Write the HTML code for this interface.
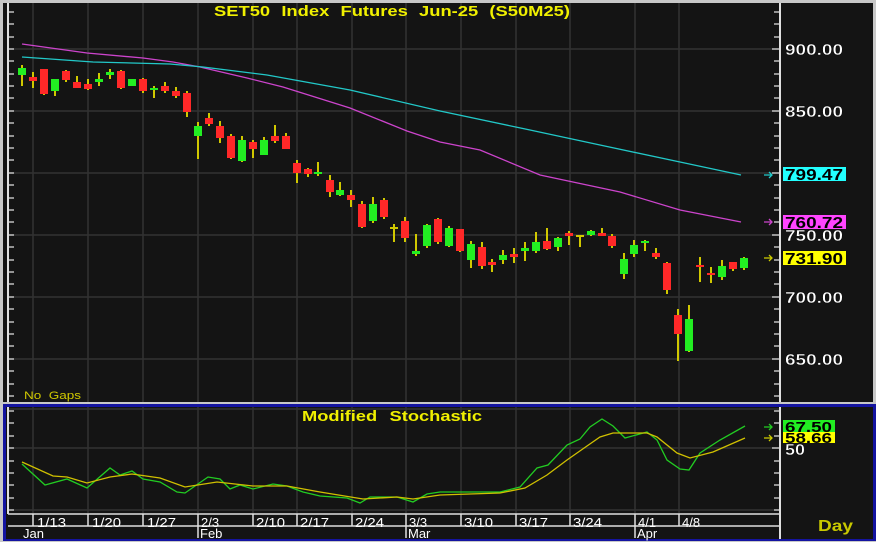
<!DOCTYPE html>
<html><head><meta charset="utf-8"><style>
html,body{margin:0;padding:0;background:#c8c8c8;}
svg{display:block;font-family:"Liberation Sans",Arial,sans-serif;}
.t{font-weight:bold;fill:#f0f000;font-size:14px;}
.p{font-weight:bold;fill:#fff;font-size:16px;stroke:#000;stroke-width:0.4;}
.d{fill:#fff;font-size:13px;}
</style></head><body>
<svg width="876" height="542" viewBox="0 0 876 542" xmlns="http://www.w3.org/2000/svg">
<rect x="0" y="0" width="876" height="542" fill="#c8c8c8"/>
<rect x="3" y="3" width="870" height="399" fill="#141414"/>
<rect x="3" y="404" width="873" height="137" fill="#1414a0"/>
<rect x="6" y="407" width="867" height="132" fill="#141414"/>
<g stroke="#333" stroke-width="1.5">
<line x1="9" y1="49" x2="779" y2="49"/><line x1="9" y1="111" x2="779" y2="111"/><line x1="9" y1="173" x2="779" y2="173"/><line x1="9" y1="235" x2="779" y2="235"/><line x1="9" y1="297" x2="779" y2="297"/><line x1="9" y1="359" x2="779" y2="359"/>
<line x1="33" y1="3" x2="33" y2="402"/><line x1="88" y1="3" x2="88" y2="402"/><line x1="143" y1="3" x2="143" y2="402"/><line x1="198" y1="3" x2="198" y2="402"/><line x1="253" y1="3" x2="253" y2="402"/><line x1="297" y1="3" x2="297" y2="402"/><line x1="352" y1="3" x2="352" y2="402"/><line x1="406" y1="3" x2="406" y2="402"/><line x1="461" y1="3" x2="461" y2="402"/><line x1="516" y1="3" x2="516" y2="402"/><line x1="570" y1="3" x2="570" y2="402"/><line x1="635" y1="3" x2="635" y2="402"/><line x1="679" y1="3" x2="679" y2="402"/>
<line x1="9" y1="409" x2="779" y2="409"/><line x1="9" y1="448" x2="779" y2="448"/><line x1="9" y1="510" x2="779" y2="510"/>
<line x1="33" y1="407" x2="33" y2="514"/><line x1="88" y1="407" x2="88" y2="514"/><line x1="143" y1="407" x2="143" y2="514"/><line x1="198" y1="407" x2="198" y2="514"/><line x1="253" y1="407" x2="253" y2="514"/><line x1="297" y1="407" x2="297" y2="514"/><line x1="352" y1="407" x2="352" y2="514"/><line x1="406" y1="407" x2="406" y2="514"/><line x1="461" y1="407" x2="461" y2="514"/><line x1="516" y1="407" x2="516" y2="514"/><line x1="570" y1="407" x2="570" y2="514"/><line x1="635" y1="407" x2="635" y2="514"/><line x1="679" y1="407" x2="679" y2="514"/>
</g>
<g stroke="#e0e0e0" stroke-width="2">
<line x1="8" y1="3" x2="8" y2="402"/><line x1="780" y1="3" x2="780" y2="402"/>
<line x1="8" y1="407" x2="8" y2="514"/><line x1="780" y1="407" x2="780" y2="539"/>
</g>
<g stroke="#e0e0e0" stroke-width="1.2">
<path d="M8 12h6M8 24h6M8 37h6M8 49h6M8 61h6M8 74h6M8 86h6M8 98h6M8 111h6M8 123h6M8 136h6M8 148h6M8 160h6M8 173h6M8 185h6M8 198h6M8 210h6M8 222h6M8 235h6M8 247h6M8 260h6M8 272h6M8 284h6M8 297h6M8 309h6M8 322h6M8 334h6M8 346h6M8 359h6M8 371h6M8 384h6M8 396h6"/>
<path d="M780 12h-6M780 24h-6M780 37h-6M780 49h-8M780 61h-6M780 74h-6M780 86h-6M780 98h-6M780 111h-8M780 123h-6M780 136h-6M780 148h-6M780 160h-6M780 173h-8M780 185h-6M780 198h-6M780 210h-6M780 222h-6M780 235h-8M780 247h-6M780 260h-6M780 272h-6M780 284h-6M780 297h-8M780 309h-6M780 322h-6M780 334h-6M780 346h-6M780 359h-8M780 371h-6M780 384h-6M780 396h-6"/>
<path d="M8 411h6M8 423h6M8 436h6M8 448h6M8 461h6M8 473h6M8 485h6M8 498h6M8 510h6"/>
<path d="M780 411h-6M780 423h-6M780 436h-6M780 448h-8M780 461h-6M780 473h-6M780 485h-6M780 498h-6M780 510h-6"/>
</g>
<polyline fill="none" stroke="#cc44cc" stroke-width="1.3" points="22,44 87,53 143,58 173,62 200,67 247,78 283,87 350,108 407,131 440,142 480,150 540,175 620,192 680,210 741,222"/>
<polyline fill="none" stroke="#22c8c8" stroke-width="1.3" points="22,57 93,62 170,64 203,67 267,75 350,90 440,111 530,130 600,145 680,162 741,175"/>
<g stroke="#d0c800" stroke-width="2">
<line x1="22" y1="65" x2="22" y2="86"/><line x1="33" y1="72" x2="33" y2="88"/><line x1="44" y1="69" x2="44" y2="95"/><line x1="55" y1="79" x2="55" y2="96"/><line x1="66" y1="70" x2="66" y2="82"/><line x1="77" y1="76" x2="77" y2="88"/><line x1="88" y1="79" x2="88" y2="90"/><line x1="99" y1="73" x2="99" y2="86"/><line x1="110" y1="69" x2="110" y2="79"/><line x1="121" y1="70" x2="121" y2="89"/><line x1="132" y1="79" x2="132" y2="86"/><line x1="143" y1="78" x2="143" y2="93"/><line x1="154" y1="86" x2="154" y2="98"/><line x1="165" y1="82" x2="165" y2="93"/><line x1="176" y1="87" x2="176" y2="98"/><line x1="187" y1="91" x2="187" y2="117"/><line x1="198" y1="122" x2="198" y2="159"/><line x1="209" y1="113" x2="209" y2="126"/><line x1="220" y1="121" x2="220" y2="143"/><line x1="231" y1="134" x2="231" y2="159"/><line x1="242" y1="136" x2="242" y2="162"/><line x1="253" y1="140" x2="253" y2="158"/><line x1="264" y1="137" x2="264" y2="155"/><line x1="275" y1="125" x2="275" y2="143"/><line x1="286" y1="133" x2="286" y2="149"/>
<line x1="297" y1="160" x2="297" y2="183"/><line x1="308" y1="168" x2="308" y2="177"/><line x1="318" y1="162" x2="318" y2="176"/><line x1="330" y1="175" x2="330" y2="197"/><line x1="340" y1="182" x2="340" y2="196"/><line x1="351" y1="190" x2="351" y2="207"/><line x1="362" y1="201" x2="362" y2="228"/><line x1="373" y1="197" x2="373" y2="223"/><line x1="384" y1="198" x2="384" y2="219"/><line x1="394" y1="224" x2="394" y2="242"/><line x1="405" y1="217" x2="405" y2="242"/><line x1="416" y1="234" x2="416" y2="256"/><line x1="427" y1="224" x2="427" y2="248"/><line x1="438" y1="218" x2="438" y2="244"/><line x1="449" y1="226" x2="449" y2="247"/><line x1="460" y1="229" x2="460" y2="252"/><line x1="471" y1="241" x2="471" y2="268"/><line x1="482" y1="242" x2="482" y2="269"/><line x1="492" y1="259" x2="492" y2="272"/><line x1="503" y1="250" x2="503" y2="264"/><line x1="514" y1="248" x2="514" y2="263"/><line x1="525" y1="242" x2="525" y2="261"/><line x1="536" y1="232" x2="536" y2="253"/><line x1="547" y1="228" x2="547" y2="250"/><line x1="558" y1="237" x2="558" y2="251"/><line x1="569" y1="231" x2="569" y2="245"/><line x1="580" y1="235" x2="580" y2="247"/><line x1="591" y1="230" x2="591" y2="236"/><line x1="602" y1="228" x2="602" y2="236"/><line x1="612" y1="234" x2="612" y2="248"/>
<line x1="624" y1="253" x2="624" y2="279"/><line x1="634" y1="240" x2="634" y2="257"/><line x1="645" y1="240" x2="645" y2="251"/><line x1="656" y1="248" x2="656" y2="259"/><line x1="667" y1="262" x2="667" y2="294"/><line x1="678" y1="309" x2="678" y2="361"/><line x1="689" y1="305" x2="689" y2="352"/><line x1="700" y1="257" x2="700" y2="282"/><line x1="711" y1="267" x2="711" y2="283"/><line x1="722" y1="260" x2="722" y2="280"/><line x1="733" y1="262" x2="733" y2="271"/><line x1="744" y1="257" x2="744" y2="270"/>
<line x1="390" y1="228" x2="398" y2="228"/><line x1="576" y1="236" x2="584" y2="236"/>
</g>
<g fill="#ff2828">
<rect x="29" y="77" width="8" height="4"/><rect x="40" y="69" width="8" height="25"/><rect x="62" y="71" width="8" height="9"/><rect x="73" y="82" width="8" height="6"/><rect x="84" y="84" width="8" height="5"/><rect x="117" y="71" width="8" height="17"/><rect x="139" y="79" width="8" height="12"/><rect x="161" y="86" width="8" height="5"/><rect x="172" y="91" width="8" height="5"/><rect x="183" y="93" width="8" height="19"/><rect x="205" y="118" width="8" height="6"/><rect x="216" y="126" width="8" height="12"/><rect x="227" y="136" width="8" height="22"/><rect x="249" y="142" width="8" height="7"/><rect x="271" y="136" width="8" height="5"/><rect x="282" y="136" width="8" height="13"/>
<rect x="293" y="163" width="8" height="10"/><rect x="304" y="169" width="8" height="5"/><rect x="326" y="180" width="8" height="12"/><rect x="347" y="195" width="8" height="5"/><rect x="358" y="204" width="8" height="23"/><rect x="380" y="200" width="8" height="17"/><rect x="401" y="221" width="8" height="17"/><rect x="434" y="219" width="8" height="23"/><rect x="456" y="229" width="8" height="22"/><rect x="478" y="247" width="8" height="19"/><rect x="488" y="262" width="8" height="3"/><rect x="510" y="254" width="8" height="3"/><rect x="543" y="241" width="8" height="8"/><rect x="565" y="233" width="8" height="3"/><rect x="598" y="233" width="8" height="3"/><rect x="608" y="236" width="8" height="10"/>
<rect x="652" y="253" width="8" height="4"/><rect x="663" y="263" width="8" height="27"/><rect x="674" y="315" width="8" height="19"/><rect x="696" y="265" width="8" height="2"/><rect x="707" y="273" width="8" height="2"/><rect x="729" y="262" width="8" height="7"/>
</g>
<g fill="#22ee22">
<rect x="18" y="68" width="8" height="7"/><rect x="51" y="79" width="8" height="12"/><rect x="95" y="79" width="8" height="3"/><rect x="106" y="72" width="8" height="3"/><rect x="128" y="79" width="8" height="7"/><rect x="150" y="88" width="8" height="2"/><rect x="194" y="126" width="8" height="10"/><rect x="238" y="140" width="8" height="21"/><rect x="260" y="140" width="8" height="15"/>
<rect x="314" y="172" width="8" height="2"/><rect x="336" y="190" width="8" height="5"/><rect x="369" y="204" width="8" height="17"/><rect x="412" y="251" width="8" height="3"/><rect x="423" y="225" width="8" height="21"/><rect x="445" y="228" width="8" height="18"/><rect x="467" y="244" width="8" height="16"/><rect x="499" y="255" width="8" height="5"/><rect x="521" y="248" width="8" height="3"/><rect x="532" y="242" width="8" height="9"/><rect x="554" y="238" width="8" height="9"/><rect x="587" y="231" width="8" height="4"/>
<rect x="620" y="259" width="8" height="15"/><rect x="630" y="245" width="8" height="9"/><rect x="641" y="241" width="8" height="2"/><rect x="685" y="319" width="8" height="32"/><rect x="718" y="266" width="8" height="11"/><rect x="740" y="258" width="8" height="10"/>
</g>
<polyline fill="none" stroke="#22cc22" stroke-width="1.3" points="22,464 45,485 67,479 87,488 110,468 120,475 132,471 143,479 160,482 177,492 185,493 208,477 220,479 230,489 240,485 253,489 273,484 287,486 303,492 320,496 347,498 360,503 370,497 397,497 413,502 427,494 440,492 500,492 520,487 537,468 548,465 567,445 580,439 590,427 602,419 613,426 625,438 647,432 657,440 667,460 680,469 689,470 700,453 720,440 745,426"/>
<polyline fill="none" stroke="#d0c000" stroke-width="1.3" points="22,462 53,476 67,477 87,483 110,477 132,474 160,478 185,487 217,482 253,486 287,486 320,492 363,499 397,497 413,499 440,495 500,493 525,488 547,475 567,460 587,446 600,437 613,433 647,433 657,437 677,453 690,458 713,452 745,438"/>
<g stroke="#e0e0e0" stroke-width="1.5">
<line x1="8" y1="514" x2="780" y2="514"/><line x1="8" y1="526" x2="780" y2="526"/>
<path d="M33 514v12M88 514v12M143 514v12M198 514v12M253 514v12M297 514v12M352 514v12M406 514v12M461 514v12M516 514v12M570 514v12M635 514v12M679 514v12M198 526v12M406 526v12M635 526v12"/>
</g>
<g class="d">
<text x="37" y="527" textLength="29" lengthAdjust="spacingAndGlyphs">1/13</text><text x="92" y="527" textLength="29" lengthAdjust="spacingAndGlyphs">1/20</text><text x="147" y="527" textLength="29" lengthAdjust="spacingAndGlyphs">1/27</text><text x="201" y="527">2/3</text><text x="256" y="527" textLength="29" lengthAdjust="spacingAndGlyphs">2/10</text><text x="300" y="527" textLength="29" lengthAdjust="spacingAndGlyphs">2/17</text><text x="355" y="527" textLength="29" lengthAdjust="spacingAndGlyphs">2/24</text><text x="409" y="527">3/3</text><text x="464" y="527" textLength="29" lengthAdjust="spacingAndGlyphs">3/10</text><text x="519" y="527" textLength="29" lengthAdjust="spacingAndGlyphs">3/17</text><text x="573" y="527" textLength="29" lengthAdjust="spacingAndGlyphs">3/24</text><text x="638" y="527">4/1</text><text x="682" y="527">4/8</text>
<text x="23" y="538">Jan</text><text x="200" y="538">Feb</text><text x="408" y="538">Mar</text><text x="637" y="538">Apr</text>
</g>
<text x="818" y="531" font-size="16" font-weight="bold" fill="#c8c800" textLength="35" lengthAdjust="spacingAndGlyphs">Day</text>
<text class="t" x="214" y="16" textLength="356" lengthAdjust="spacingAndGlyphs" style="font-size:15px;word-spacing:5px">SET50  Index  Futures  Jun-25  (S50M25)</text>
<text class="t" x="302" y="421" textLength="180" lengthAdjust="spacingAndGlyphs" style="font-size:15px;word-spacing:6px">Modified  Stochastic</text>
<text x="24" y="399" font-size="11" fill="#d0c800" textLength="57" lengthAdjust="spacingAndGlyphs" style="word-spacing:3px">No  Gaps</text>
<g class="p"><text x="785" y="55" textLength="58" lengthAdjust="spacingAndGlyphs">900.00</text><text x="785" y="117" textLength="58" lengthAdjust="spacingAndGlyphs">850.00</text><text x="785" y="241" textLength="58" lengthAdjust="spacingAndGlyphs">750.00</text><text x="785" y="303" textLength="58" lengthAdjust="spacingAndGlyphs">700.00</text><text x="785" y="365" textLength="58" lengthAdjust="spacingAndGlyphs">650.00</text><text x="785" y="455" textLength="20" lengthAdjust="spacingAndGlyphs">50</text></g>
<rect x="783" y="167" width="63" height="14" fill="#22ffff"/><text x="785" y="180" font-size="16" font-weight="bold" fill="#000" textLength="58" lengthAdjust="spacingAndGlyphs">799.47</text>
<rect x="783" y="215" width="63" height="14" fill="#ff44ff"/><text x="785" y="228" font-size="16" font-weight="bold" fill="#000" textLength="58" lengthAdjust="spacingAndGlyphs">760.72</text>
<rect x="783" y="251" width="63" height="14" fill="#ffff00"/><text x="785" y="264" font-size="16" font-weight="bold" fill="#000" textLength="58" lengthAdjust="spacingAndGlyphs">731.90</text>
<rect x="783" y="420" width="52" height="12" fill="#22ee22"/><text x="785" y="432" font-size="15" font-weight="bold" fill="#000" textLength="47" lengthAdjust="spacingAndGlyphs">67.50</text>
<rect x="783" y="432" width="52" height="11" fill="#ffff00"/><text x="785" y="443" font-size="15" font-weight="bold" fill="#000" textLength="47" lengthAdjust="spacingAndGlyphs">58.66</text>
<g stroke-width="1.3" fill="none">
<path d="M764 175h8M769 172l3 3-3 3" stroke="#22cccc"/>
<path d="M764 222h8M769 219l3 3-3 3" stroke="#cc44cc"/>
<path d="M764 258h8M769 255l3 3-3 3" stroke="#cccc00"/>
<path d="M764 427h8M769 424l3 3-3 3" stroke="#22cc22"/>
<path d="M764 438h8M769 435l3 3-3 3" stroke="#cccc00"/>
</g>
</svg>
</body></html>
